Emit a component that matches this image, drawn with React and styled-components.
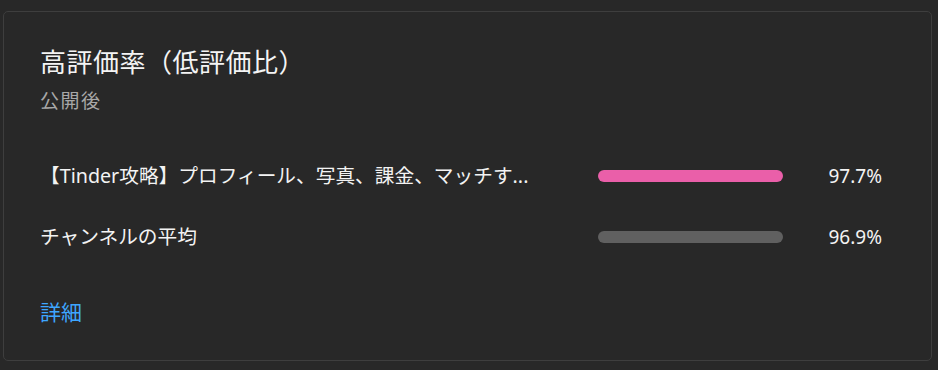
import React from 'react';
import styled, { createGlobalStyle } from 'styled-components';

const GlobalStyle = createGlobalStyle`
  html, body {
    margin: 0;
    padding: 0;
    background: #282828;
  }
  body {
    font-family: "Noto Sans", "Noto Sans CJK JP", sans-serif;
    color: #f1f1f1;
  }
`;

const Page = styled.div`
  width: 938px;
  height: 370px;
  padding: 11px 6px 0 3px;
  box-sizing: border-box;
`;

const Card = styled.section`
  height: 350px;
  box-sizing: border-box;
  border: 1px solid #3e3e3e;
  border-radius: 5px;
  background: #282828;
  padding: 32px 49px 0 36px;
`;

const Title = styled.h2`
  margin: 0;
  font-size: 26px;
  font-weight: 400;
  line-height: 36px;
  color: #f4f4f4;
  letter-spacing: 0.5px;
`;

const Subtitle = styled.div`
  margin-top: 9px;
  font-size: 19px;
  line-height: 24px;
  color: #a8a8a8;
  letter-spacing: 1.5px;
`;

const Rows = styled.div`
  margin-top: 49px;
  display: flex;
  flex-direction: column;
  gap: 33px;
`;

const Row = styled.div`
  display: grid;
  grid-template-columns: 1fr 185px 99px;
  align-items: center;
  height: 28px;
`;

const Label = styled.div`
  font-size: 19.7px;
  line-height: 28px;
  white-space: nowrap;
  padding-right: 30px;
  color: #f3f3f3;
`;

const Track = styled.div`
  height: 12px;
  border-radius: 6px;
  background: ${({ $color }) => $color};
`;

const Value = styled.div`
  text-align: right;
  font-size: 19px;
  line-height: 28px;
  color: #f3f3f3;
`;

const More = styled.a`
  display: inline-block;
  margin-top: 47px;
  font-size: 21px;
  line-height: 28px;
  color: #3ea6ff;
  text-decoration: none;
  cursor: pointer;
`;

const rows = [
  { label: '【Tinder攻略】プロフィール、写真、課金、マッチす...', value: '97.7%', color: '#ea5fa9' },
  { label: 'チャンネルの平均', value: '96.9%', color: '#606060' },
];

export default function App() {
  return (
    <Page>
      <GlobalStyle />
      <Card>
        <Title>高評価率（低評価比）</Title>
        <Subtitle>公開後</Subtitle>
        <Rows>
          {rows.map((r) => (
            <Row key={r.label}>
              <Label>{r.label}</Label>
              <Track $color={r.color} />
              <Value>{r.value}</Value>
            </Row>
          ))}
        </Rows>
        <More>詳細</More>
      </Card>
    </Page>
  );
}
